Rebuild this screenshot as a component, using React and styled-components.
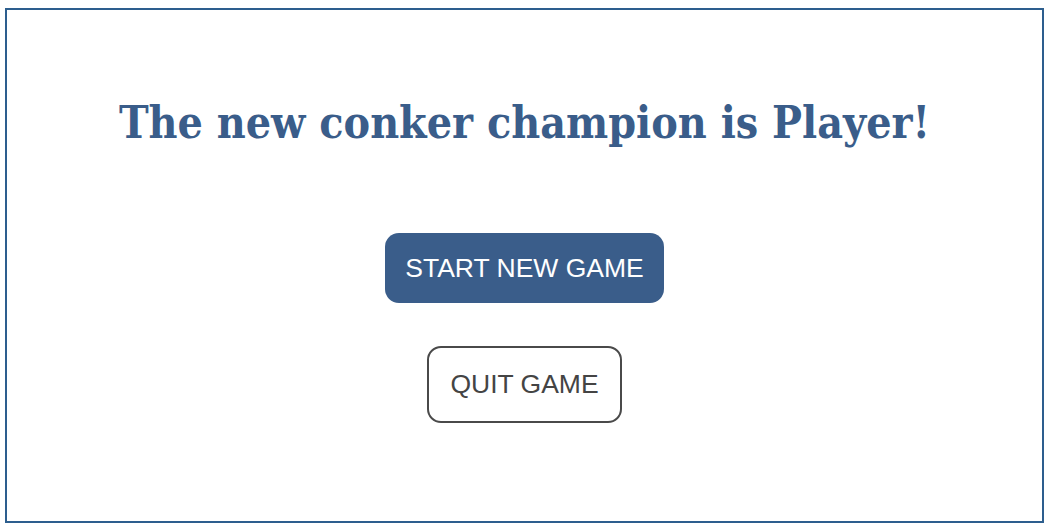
import React from "react";
import styled, { createGlobalStyle } from "styled-components";

const Global = createGlobalStyle`
  html, body { margin: 0; padding: 0; background: #fff; }
  body { font-family: "Liberation Sans", Arial, sans-serif; }
`;

const Frame = styled.div`
  box-sizing: border-box;
  margin: 8px 4px 0 5px;
  height: 515px;
  border: 2px solid #2d5e8e;
  display: flex;
  flex-direction: column;
  align-items: center;
`;

const Title = styled.h1`
  margin: 86px 0 0;
  font-family: "DejaVu Serif Condensed", "DejaVu Serif", serif;
  font-weight: bold;
  font-size: 44.3px;
  line-height: 52px;
  color: #3a5d8a;
`;

const Actions = styled.div`
  margin-top: 85px;
  display: flex;
  flex-direction: column;
  align-items: center;
  gap: 43px;
`;

const Button = styled.button`
  font-family: "Liberation Sans", Arial, sans-serif;
  font-size: 26.5px;
  line-height: 30px;
  border-radius: 14px;
  cursor: pointer;
  background: ${(p) => (p.$primary ? "#3a5d8a" : "#fff")};
  color: ${(p) => (p.$primary ? "#fff" : "#444")};
  border: ${(p) => (p.$primary ? "none" : "2px solid #4a4a4a")};
  padding: ${(p) => (p.$primary ? "20px 20px" : "21px 21px 22px")};
`;

export default function App() {
  return (
    <>
      <Global />
      <Frame>
        <Title>The new conker champion is Player!</Title>
        <Actions>
          <Button $primary>START NEW GAME</Button>
          <Button>QUIT GAME</Button>
        </Actions>
      </Frame>
    </>
  );
}
